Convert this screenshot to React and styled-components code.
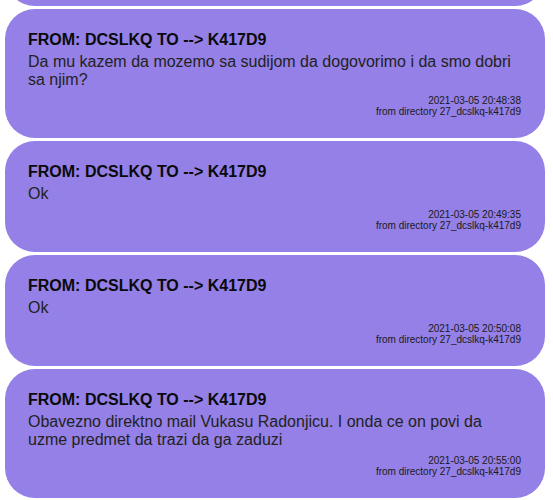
import React from 'react';
import styled, { createGlobalStyle } from 'styled-components';

const GlobalStyle = createGlobalStyle`
    html, body {
        margin: 0;
        padding: 0;
        background: #ffffff;
        overflow: hidden;
    }
    body {
        font-family: "Liberation Sans", Arial, sans-serif;
    }
`;

// list is scrolled so that only the tail of the first message shows
const MessageList = styled.div`
    display: flex;
    flex-direction: column;
    gap: 3px;
    margin-top: -105px;
    padding: 0 8px 0 5px;
`;

const MessageCard = styled.div`
    background: #9480e6;
    border-radius: 30px;
    padding: 22px 24px 21px 23px;
    display: flex;
    flex-direction: column;
`;

const MessageTitle = styled.div`
    font-size: 16px;
    line-height: 18px;
    font-weight: bold;
    color: #0a0a0a;
`;

const MessageBody = styled.div`
    margin-top: 4px;
    font-size: 16px;
    line-height: 18px;
    color: #222;
`;

const MessageMeta = styled.div`
    margin-top: 6px;
    text-align: right;
    font-size: 10px;
    line-height: 11px;
    color: #1a1a1a;
`;

const messages = [
    { from: 'DCSLKQ', to: 'K417D9', text: 'Ok', time: '2021-03-05 20:47:12' },
    {
        from: 'DCSLKQ',
        to: 'K417D9',
        text: 'Da mu kazem da mozemo sa sudijom da dogovorimo i da smo dobri sa njim?',
        time: '2021-03-05 20:48:38',
    },
    { from: 'DCSLKQ', to: 'K417D9', text: 'Ok', time: '2021-03-05 20:49:35' },
    { from: 'DCSLKQ', to: 'K417D9', text: 'Ok', time: '2021-03-05 20:50:08' },
    {
        from: 'DCSLKQ',
        to: 'K417D9',
        text: 'Obavezno direktno mail Vukasu Radonjicu. I onda ce on povi da uzme predmet da trazi da ga zaduzi',
        time: '2021-03-05 20:55:00',
    },
];

const Message = ({ from, to, text, time }) => (
    <MessageCard>
        <MessageTitle>FROM: {from} TO --&gt; {to}</MessageTitle>
        <MessageBody>{text}</MessageBody>
        <MessageMeta>
            {time}
            <br />
            from directory 27_{from.toLowerCase()}-{to.toLowerCase()}
        </MessageMeta>
    </MessageCard>
);

const App = () => {
    return (
        <>
            <GlobalStyle />
            <MessageList>
                {messages.map((m, i) => (
                    <Message key={i} {...m} />
                ))}
            </MessageList>
        </>
    );
};

export default App;
